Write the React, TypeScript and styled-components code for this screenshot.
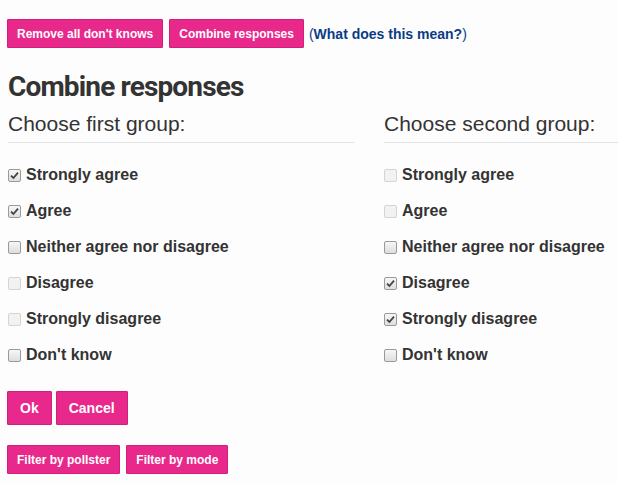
import styled, { createGlobalStyle } from "styled-components";

const GlobalStyle = createGlobalStyle`
  html, body {
    margin: 0;
    padding: 0;
    background: #fdfdfd;
    overflow: hidden;
  }
  body {
    font-family: "Liberation Sans", Arial, sans-serif;
    color: #333;
  }
`;

const Page = styled.div`
  padding: 19px 0 0 7px;
`;

const Toolbar = styled.div`
  display: flex;
  align-items: center;
  gap: 6px;
`;

const PinkButton = styled.button<{ size?: "sm" | "md" }>`
  background: #e8298b;
  border: 1px solid #d21f7c;
  border-radius: 1px;
  color: #fff;
  font-family: "Liberation Sans", Arial, sans-serif;
  font-weight: 700;
  font-size: ${(p) => (p.size === "md" ? "14px" : "12px")};
  height: ${(p) => (p.size === "md" ? "34px" : "29px")};
  padding: ${(p) => (p.size === "md" ? "0 12px" : "0 9px")};
  cursor: pointer;
`;

const Help = styled.span`
  font-size: 14px;
  color: #0b3c85;
  margin-left: -1px;
  a {
    font-weight: 700;
    color: #0b3c85;
    text-decoration: none;
  }
`;

const Title = styled.h2`
  font-family: Roboto, "Liberation Sans", sans-serif;
  font-weight: 700;
  font-size: 28px;
  letter-spacing: -0.85px;
  margin: 21px 0 0 1px;
  line-height: 36px;
`;

const Columns = styled.div`
  display: grid;
  grid-template-columns: 346px 1fr;
  column-gap: 30px;
  margin-top: 4px;
  padding-left: 1px;
`;

const GroupTitle = styled.h3`
  font-family: "Liberation Sans", Arial, sans-serif;
  font-weight: 400;
  font-size: 21px;
  line-height: 30px;
  margin: 0;
  padding-bottom: 3px;
  border-bottom: 1px solid #e3e3e3;
  white-space: nowrap;
`;

const OptionList = styled.div`
  display: flex;
  flex-direction: column;
  margin-top: 14px;
`;

const Option = styled.label`
  display: flex;
  align-items: center;
  height: 36px;
  gap: 5px;
  font-weight: 700;
  font-size: 16px;
  color: #333;
  white-space: nowrap;
`;

const Box = styled.span<{ $disabled?: boolean }>`
  width: 11px;
  height: 11px;
  border: 1px solid ${(p) => (p.$disabled ? "#d4d4d4" : "#9a9a9a")};
  border-radius: 2px;
  background: ${(p) =>
    p.$disabled
      ? "#f2f2f2"
      : "linear-gradient(#f6f6f6, #dedede)"};
  display: flex;
  align-items: center;
  justify-content: center;
  flex: none;
`;

const Actions = styled.div`
  display: flex;
  gap: 4px;
  margin-top: 18px;
`;

const Filters = styled.div`
  display: flex;
  gap: 6px;
  margin-top: 20px;
`;

const Check = () => (
  <svg width="9" height="9" viewBox="0 0 9 9">
    <path d="M1 4.6 L3.4 7 L8 1.6" fill="none" stroke="#444" strokeWidth="1.8" />
  </svg>
);

type Opt = { label: string; checked?: boolean; disabled?: boolean };

const first: Opt[] = [
  { label: "Strongly agree", checked: true },
  { label: "Agree", checked: true },
  { label: "Neither agree nor disagree" },
  { label: "Disagree", disabled: true },
  { label: "Strongly disagree", disabled: true },
  { label: "Don't know" },
];

const second: Opt[] = [
  { label: "Strongly agree", disabled: true },
  { label: "Agree", disabled: true },
  { label: "Neither agree nor disagree" },
  { label: "Disagree", checked: true },
  { label: "Strongly disagree", checked: true },
  { label: "Don't know" },
];

function Group({ title, options }: { title: string; options: Opt[] }) {
  return (
    <div>
      <GroupTitle>{title}</GroupTitle>
      <OptionList>
        {options.map((o) => (
          <Option key={o.label}>
            <Box $disabled={o.disabled}>{o.checked ? <Check /> : null}</Box>
            {o.label}
          </Option>
        ))}
      </OptionList>
    </div>
  );
}

export default function App() {
  return (
    <>
      <GlobalStyle />
      <Page>
        <Toolbar>
          <PinkButton>Remove all don't knows</PinkButton>
          <PinkButton>Combine responses</PinkButton>
          <Help>
            (<a href="#">What does this mean?</a>)
          </Help>
        </Toolbar>
        <Title>Combine responses</Title>
        <Columns>
          <Group title="Choose first group:" options={first} />
          <Group title="Choose second group:" options={second} />
        </Columns>
        <Actions>
          <PinkButton size="md">Ok</PinkButton>
          <PinkButton size="md">Cancel</PinkButton>
        </Actions>
        <Filters>
          <PinkButton>Filter by pollster</PinkButton>
          <PinkButton>Filter by mode</PinkButton>
        </Filters>
      </Page>
    </>
  );
}
